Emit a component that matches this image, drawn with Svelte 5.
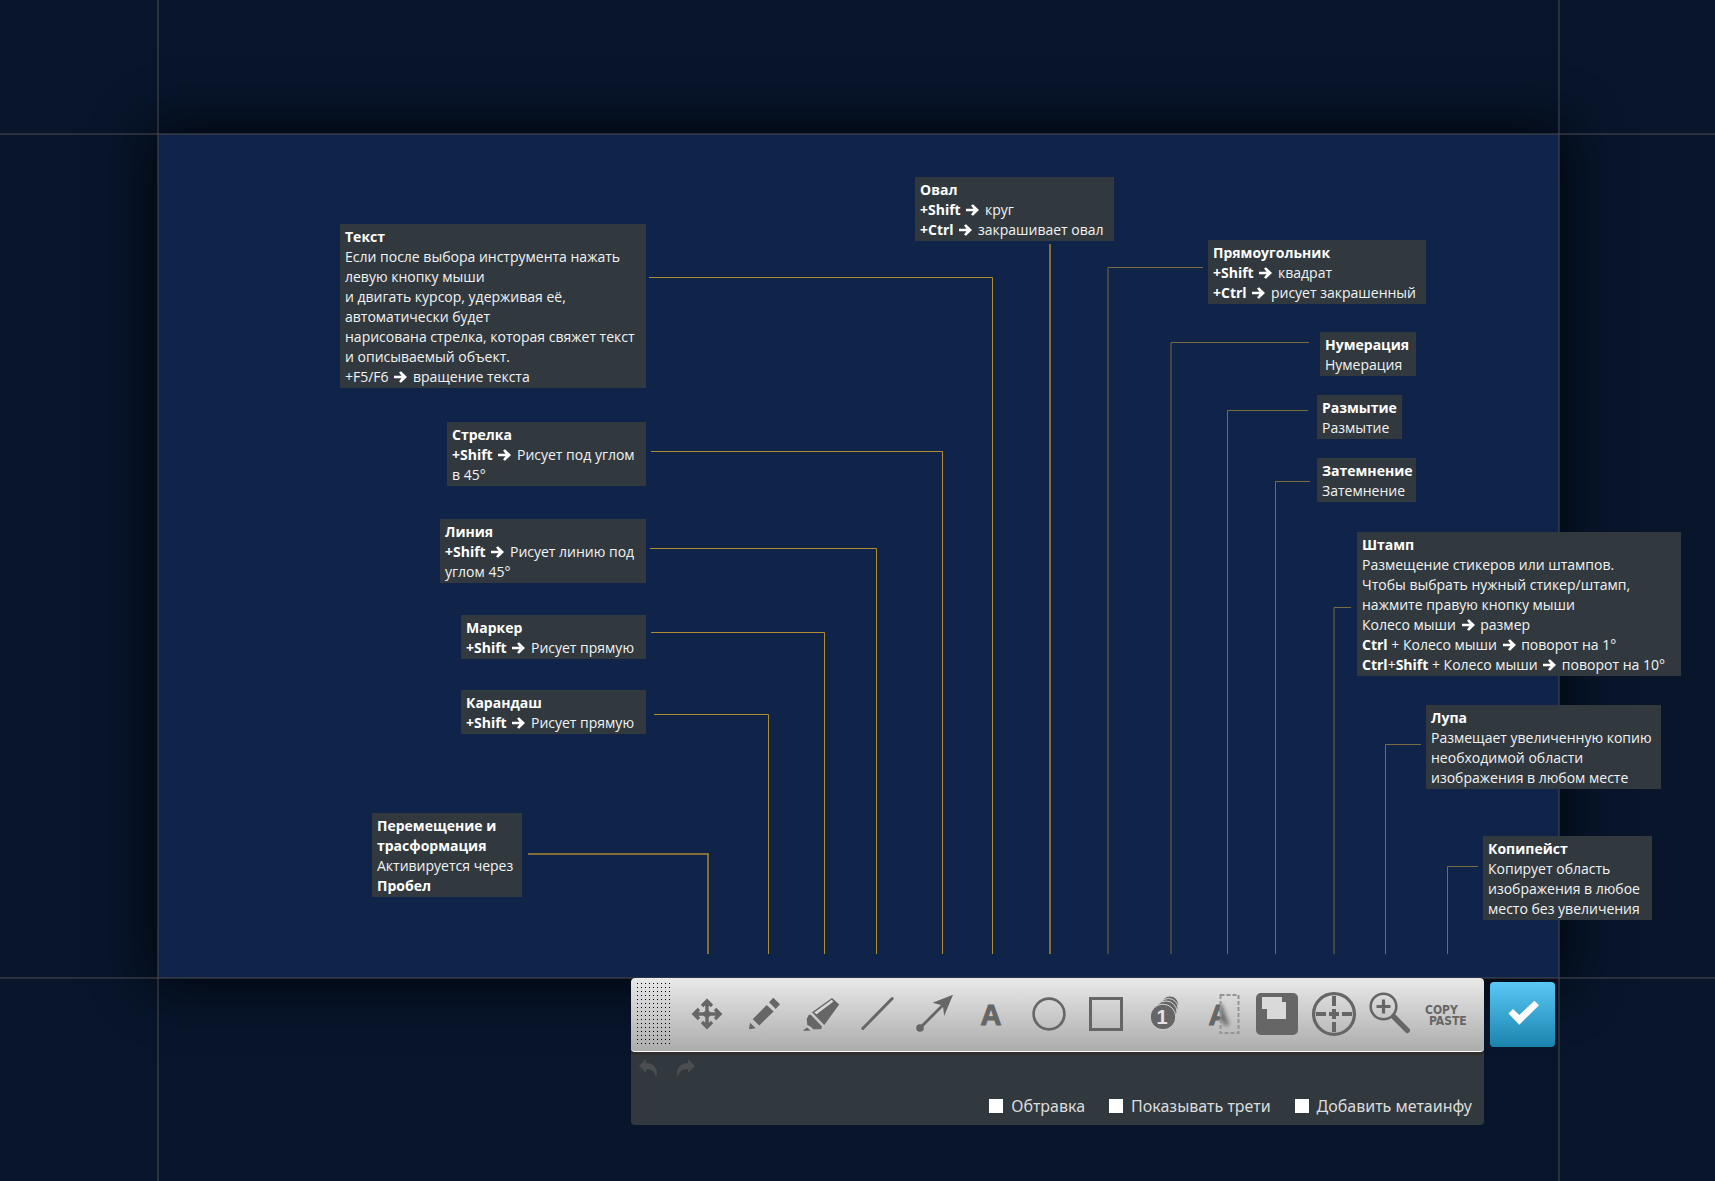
<script>
  const notes = [
    { id: 'text', x: 340, y: 224, w: 306, title: 'Текст', lines: ['Если после выбора инструмента нажать', 'левую кнопку мыши', 'и двигать курсор, удерживая её,', 'автоматически будет', 'нарисована стрелка, которая свяжет текст', 'и описываемый объект.', '+F5/F6 ➜ вращение текста'] },
    { id: 'arrow', x: 447, y: 422, w: 199, title: 'Стрелка', lines: ['*+Shift* ➜ Рисует под углом', 'в 45°'] },
    { id: 'line', x: 440, y: 519, w: 206, title: 'Линия', lines: ['*+Shift* ➜ Рисует линию под', 'углом 45°'] },
    { id: 'marker', x: 461, y: 615, w: 185, title: 'Маркер', lines: ['*+Shift* ➜ Рисует прямую'] },
    { id: 'pencil', x: 461, y: 690, w: 185, title: 'Карандаш', lines: ['*+Shift* ➜ Рисует прямую'] },
    { id: 'move', x: 372, y: 813, w: 150, title: 'Перемещение и трасформация', lines: ['Активируется через', '*Пробел*'] },
    { id: 'oval', x: 915, y: 177, w: 199, title: 'Овал', lines: ['*+Shift* ➜ круг', '*+Ctrl* ➜ закрашивает овал'] },
    { id: 'rect', x: 1208, y: 240, w: 218, title: 'Прямоугольник', lines: ['*+Shift* ➜ квадрат', '*+Ctrl* ➜ рисует закрашенный'] },
    { id: 'number', x: 1320, y: 332, w: 96, title: 'Нумерация', lines: ['Нумерация'] },
    { id: 'blur', x: 1317, y: 395, w: 85, title: 'Размытие', lines: ['Размытие'] },
    { id: 'shade', x: 1317, y: 458, w: 99, title: 'Затемнение', lines: ['Затемнение'] },
    { id: 'stamp', x: 1357, y: 532, w: 324, title: 'Штамп', lines: ['Размещение стикеров или штампов.', 'Чтобы выбрать нужный стикер/штамп,', 'нажмите правую кнопку мыши', 'Колесо мыши ➜ размер', '*Ctrl* + Колесо мыши ➜ поворот на 1°', '*Ctrl*+*Shift* + Колесо мыши ➜ поворот на 10°'] },
    { id: 'loupe', x: 1426, y: 705, w: 235, title: 'Лупа', lines: ['Размещает увеличенную копию', 'необходимой области', 'изображения в любом месте'] },
    { id: 'copy', x: 1483, y: 836, w: 169, title: 'Копипейст', lines: ['Копирует область', 'изображения в любое', 'место без увеличения'] }
  ];

  const wires = [
    { d: 'M528 854H708V954', kind: 'wide' },
    { d: 'M654 714.5H768.5V954', kind: 'bright' },
    { d: 'M651 632.5H824.5V954', kind: 'bright' },
    { d: 'M650 548.5H876.5V954', kind: 'bright' },
    { d: 'M651 451.5H942.5V954', kind: 'bright' },
    { d: 'M649 277.5H992.5V954', kind: 'bright' },
    { d: 'M1050 244V954', kind: 'wide' },
    { d: 'M1203 267.5H1108V954', kind: 'dim' },
    { d: 'M1309 342.5H1171V954', kind: 'dim' },
    { d: 'M1308 410.5H1227.5V954', kind: 'dim' },
    { d: 'M1310 481.5H1275.5V954', kind: 'dim' },
    { d: 'M1351 607.5H1334V954', kind: 'dim' },
    { d: 'M1421 744.5H1385.5V954', kind: 'dim' },
    { d: 'M1478 866.5H1447.5V954', kind: 'dim' }
  ];

  const tools = [
    ['move', 'Перемещение и трасформация'], ['pencil', 'Карандаш'], ['marker', 'Маркер'],
    ['line', 'Линия'], ['arrow', 'Стрелка'], ['text', 'Текст'], ['oval', 'Овал'],
    ['rect', 'Прямоугольник'], ['number', 'Нумерация'], ['blur', 'Размытие'],
    ['shade', 'Затемнение'], ['stamp', 'Штамп'], ['loupe', 'Лупа'], ['copy', 'Копипейст']
  ];

  const options = ['Обтравка', 'Показывать трети', 'Добавить метаинфу'];

  // Splits a line on asterisks and arrows: odd asterisk chunks are bold.
  function parts(line) {
    return line.split('*').flatMap((chunk, i) =>
      chunk.split(/(➜)/).filter(Boolean).map((text) => ({ text, bold: i % 2 === 1, arrow: text === '➜' }))
    );
  }
</script>

<main class="editor">
  <div class="selection"></div>
  <div class="guide columns"></div>
  <div class="guide rows"></div>

  <div class="canvas">
    <svg class="wires" aria-hidden="true">
      {#each wires as wire}
        <path class={wire.kind} d={wire.d} />
      {/each}
    </svg>
    {#each notes as note (note.id)}
      <article class="note" style="left: {note.x}px; top: {note.y}px; width: {note.w}px">
        <h2 class:wrap={note.id === 'move'}>{note.title}</h2>
        {#each note.lines as line}
          <p>{#each parts(line) as part}{#if part.bold}<b>{part.text}</b>{:else if part.arrow}<svg class="to" viewBox="0 0 13 12" role="img" aria-label="➜"><path d="M0 4.700H7.500L5 1.400 7 .2 13 6 7 11.800 5 10.600 7.500 7.300H0Z" /></svg>{:else}{part.text}{/if}{/each}</p>
        {/each}
      </article>
    {/each}
  </div>

  <footer class="dock">
    <section class="panel">
      <div class="toolbar" role="toolbar" aria-label="Инструменты">
        <svg class="grip" viewBox="0 0 36 64" aria-hidden="true">
          <defs>
            <pattern id="dots" width="4" height="4" patternUnits="userSpaceOnUse"><rect width="1" height="1" /></pattern>
          </defs>
          <rect width="36" height="64" fill="url(#dots)" shape-rendering="crispEdges" />
        </svg>
        {#each tools as [id, label]}
          <button class="tool" aria-label={label}>
            <svg viewBox="0 0 57 72" aria-hidden="true">
              {#if id === 'move'}
                <path class="stroke" stroke-width="3.4" d="M28 24V48M16 36H40M23 28 28 23 33 28M23 44 28 49 33 44M20 31 15 36 20 41M36 31 41 36 36 41" />
                <path d="M28 31 33 36 28 41 23 36Z" />
              {:else if id === 'pencil'}
                <path d="M16.7 41.3 30.7 27 37.6 33.4 23.3 47.5ZM33 24.3 37.3 19.7 44 26.3 39.7 31ZM14 44.7 19.7 50.3 13 51.2Z" />
              {:else if id === 'marker'}
                <path d="M19 34.3 39 20 46.2 26.4 31.3 47ZM15.6 37 17.5 36.5 29 48.4 28 51.3 20.3 51.3 17.5 48.5 14.3 47 13.7 41ZM9.7 52.7 14 49.4 17.7 52.7Z" />
                <path class="pale" d="M21.2 34.4 38.6 21.7 40.5 23.5 23.6 36.3Z" />
              {:else if id === 'line'}
                <path class="stroke" stroke-width="3" stroke-linecap="round" d="M12.8 50.5 42.2 20.5" />
              {:else if id === 'arrow'}
                <circle cx="13" cy="50" r="3.8" />
                <path class="stroke" stroke-width="2.8" d="M13 50 38 25" />
                <path d="M46 16.8 37.2 38 35.8 27.6 25.6 24.8Z" />
              {:else if id === 'text'}
                <text class="letter" x="27" y="47" text-anchor="middle">A</text>
              {:else if id === 'oval'}
                <circle class="stroke" cx="28" cy="36" r="15.4" stroke-width="2.6" />
              {:else if id === 'rect'}
                <rect class="stroke" x="12.5" y="20.5" width="31" height="31" stroke-width="3" />
              {:else if id === 'number'}
                <g class="stack">
                  <circle cx="35" cy="26.5" r="8.5" />
                  <circle cx="33.5" cy="30" r="9.5" />
                  <circle cx="31" cy="34" r="11" />
                  <circle cx="28" cy="39" r="12.8" />
                </g>
                <text class="digit" x="27" y="46" text-anchor="middle">1</text>
              {:else if id === 'blur'}
                <defs>
                  <clipPath id="sharp"><rect x="0" y="0" width="28" height="72" /></clipPath>
                  <clipPath id="soft"><rect x="28" y="0" width="19" height="72" /></clipPath>
                  <filter id="haze"><feGaussianBlur stdDeviation="2" /></filter>
                </defs>
                <g clip-path="url(#sharp)"><text class="letter" x="27" y="47" text-anchor="middle">A</text></g>
                <g clip-path="url(#soft)"><text class="letter" x="27" y="47" text-anchor="middle" filter="url(#haze)">A</text></g>
                <rect class="dashed" x="28.5" y="17" width="18" height="38" />
              {:else if id === 'shade'}
                <rect x="7" y="15" width="42" height="42" rx="5" />
                <path class="pale" d="M13 19H33V24H37V41H18V31H13Z" />
              {:else if id === 'stamp'}
                <circle class="stroke" cx="28" cy="36" r="20.4" stroke-width="3.2" />
                <path class="stroke" stroke-width="4" d="M28 18V28M28 44V54M10 36H20M36 36H46M28 31V41M23 36H33" />
              {:else if id === 'loupe'}
                <circle class="stroke" cx="20.5" cy="28.5" r="12.8" stroke-width="2.6" />
                <path class="stroke" stroke-width="3.2" d="M20.5 21.5V35.5M13.5 28.5H27.5" />
                <path class="stroke" stroke-width="5.4" stroke-linecap="round" d="M31 39 44.3 52.3" />
              {:else}
                <text class="caption" x="5" y="36">COPY</text>
                <text class="caption" x="9" y="47">PASTE</text>
              {/if}
            </svg>
          </button>
        {/each}
      </div>

      <div class="history">
        <button aria-label="Отменить">
          <svg viewBox="0 0 18 19" aria-hidden="true"><path d="M0 7 7 0V4C14 4 18 8.500 18 14.500L17 19C16.500 12.500 13 10 7 10.300V14Z" /></svg>
        </button>
        <button aria-label="Повторить">
          <svg viewBox="0 0 18 19" aria-hidden="true"><path d="M18 7 11 0V4C4 4 0 8.500 0 14.500L1 19C1.500 12.500 5 10 11 10.300V14Z" /></svg>
        </button>
      </div>

      <div class="options">
        {#each options as option}
          <label><input type="checkbox" />{option}</label>
        {/each}
      </div>
    </section>

    <button class="done" aria-label="Готово">
      <svg viewBox="0 0 65 65" aria-hidden="true"><path d="M18.500 31.500 23 27 29.300 33 44.500 18.700 49 23.200 29.300 42.700Z" /></svg>
    </button>
  </footer>
</main>

<style>
  :global(body) {
    margin: 0;
    background: #08152b;
  }

  .editor {
    position: relative;
    display: grid;
    grid-template-columns: 157px 1fr 155px;
    grid-template-rows: 133px 1fr 203px;
    min-height: 100vh;
    overflow: hidden;
    background: #08152b;
    font-family: "Open Sans", "Noto Sans", sans-serif;
  }

  .selection {
    grid-area: 2 / 2;
    margin: 1px 1px 0;
    background: #102349;
    box-shadow: 0 0 48px 8px #03070e;
  }

  .guide {
    border: 0 solid rgba(72, 74, 80, 0.5);
  }

  .columns {
    grid-area: 1 / 2 / -1 / 3;
    border-width: 0 2px;
  }

  .rows {
    grid-area: 2 / 1 / 3 / -1;
    margin-bottom: -1px;
    border-width: 2px 0;
  }

  .canvas,
  .wires {
    position: absolute;
    inset: 0;
    width: 100%;
    height: 100%;
  }

  .wires path {
    fill: none;
    stroke: #b08c32;
    stroke-width: 1;
  }

  .wires .wide {
    stroke: #846f38;
    stroke-width: 2;
  }

  .wires .dim {
    stroke: #7a6c40;
  }

  .note {
    position: absolute;
    box-sizing: border-box;
    padding: 3px 0 1px 5px;
    background: #31393e;
    color: #f2f3f4;
    font-size: 14px;
    line-height: 20px;
    white-space: nowrap;
  }

  .note h2,
  .note p {
    margin: 0;
    font-size: 14px;
  }

  .note h2,
  .note b {
    color: #fff;
    font-weight: 700;
  }

  .note .wrap {
    white-space: normal;
  }

  .to {
    width: 13px;
    height: 12px;
    margin: 0 2px;
    vertical-align: -1px;
    fill: #fff;
  }

  .dock {
    position: relative;
    grid-area: 3 / 2;
    display: flex;
    justify-content: flex-end;
    align-items: flex-start;
    gap: 6px;
    padding-right: 5px;
  }

  .panel {
    overflow: hidden;
    border-radius: 4px;
    background: #31393e;
  }

  .toolbar {
    display: flex;
    align-items: flex-start;
    padding: 0 7px 1px 0;
    border-bottom: 1px solid #fff;
    border-radius: 4px;
    background: linear-gradient(#e9e9e9, #acacac);
    box-shadow: 0 3px 0 #302e2e;
  }

  .grip {
    width: 36px;
    height: 64px;
    margin: 5px 6px 0;
  }

  button {
    padding: 0;
    border: 0;
    background: none;
    cursor: pointer;
  }

  button svg {
    display: block;
  }

  .tool svg {
    width: 57px;
    height: 72px;
    fill: #666;
  }

  .tool .stroke {
    fill: none;
    stroke: #666;
  }

  .tool .pale {
    fill: #d9d9d9;
  }

  .tool .dashed {
    fill: none;
    stroke: #949494;
    stroke-width: 2;
    stroke-dasharray: 4 2;
  }

  .stack circle {
    stroke: #d2d2d2;
    stroke-width: 1;
  }

  .letter {
    font-size: 29px;
    font-weight: 800;
    stroke: #666;
    stroke-width: 1;
  }

  .digit {
    fill: #e4e4e4;
    font-size: 20px;
    font-weight: 700;
  }

  .caption {
    font-family: "DejaVu Sans Condensed", "DejaVu Sans", sans-serif;
    font-size: 12px;
    font-weight: 700;
  }

  .history {
    display: flex;
    gap: 20px;
    padding: 7px 8px 0;
  }

  .history svg {
    width: 18px;
    height: 19px;
    fill: #4b4d50;
  }

  .options {
    display: flex;
    justify-content: flex-end;
    gap: 24px;
    padding: 18px 12px 9px;
    color: #dcdcdc;
    font-family: "Noto Sans", sans-serif;
    font-size: 16px;
    line-height: 20px;
  }

  .options label {
    display: flex;
    align-items: center;
    gap: 8px;
  }

  .options input {
    width: 14px;
    height: 14px;
    margin: 0;
    appearance: none;
    background: #fff;
  }

  .options input:checked {
    background: #4fb9e6;
  }

  .done {
    margin-top: 4px;
    border-radius: 4px;
    background: linear-gradient(#5ac8f5, #1a83ad);
  }

  .done svg {
    width: 65px;
    height: 65px;
    fill: #fff;
  }
</style>
